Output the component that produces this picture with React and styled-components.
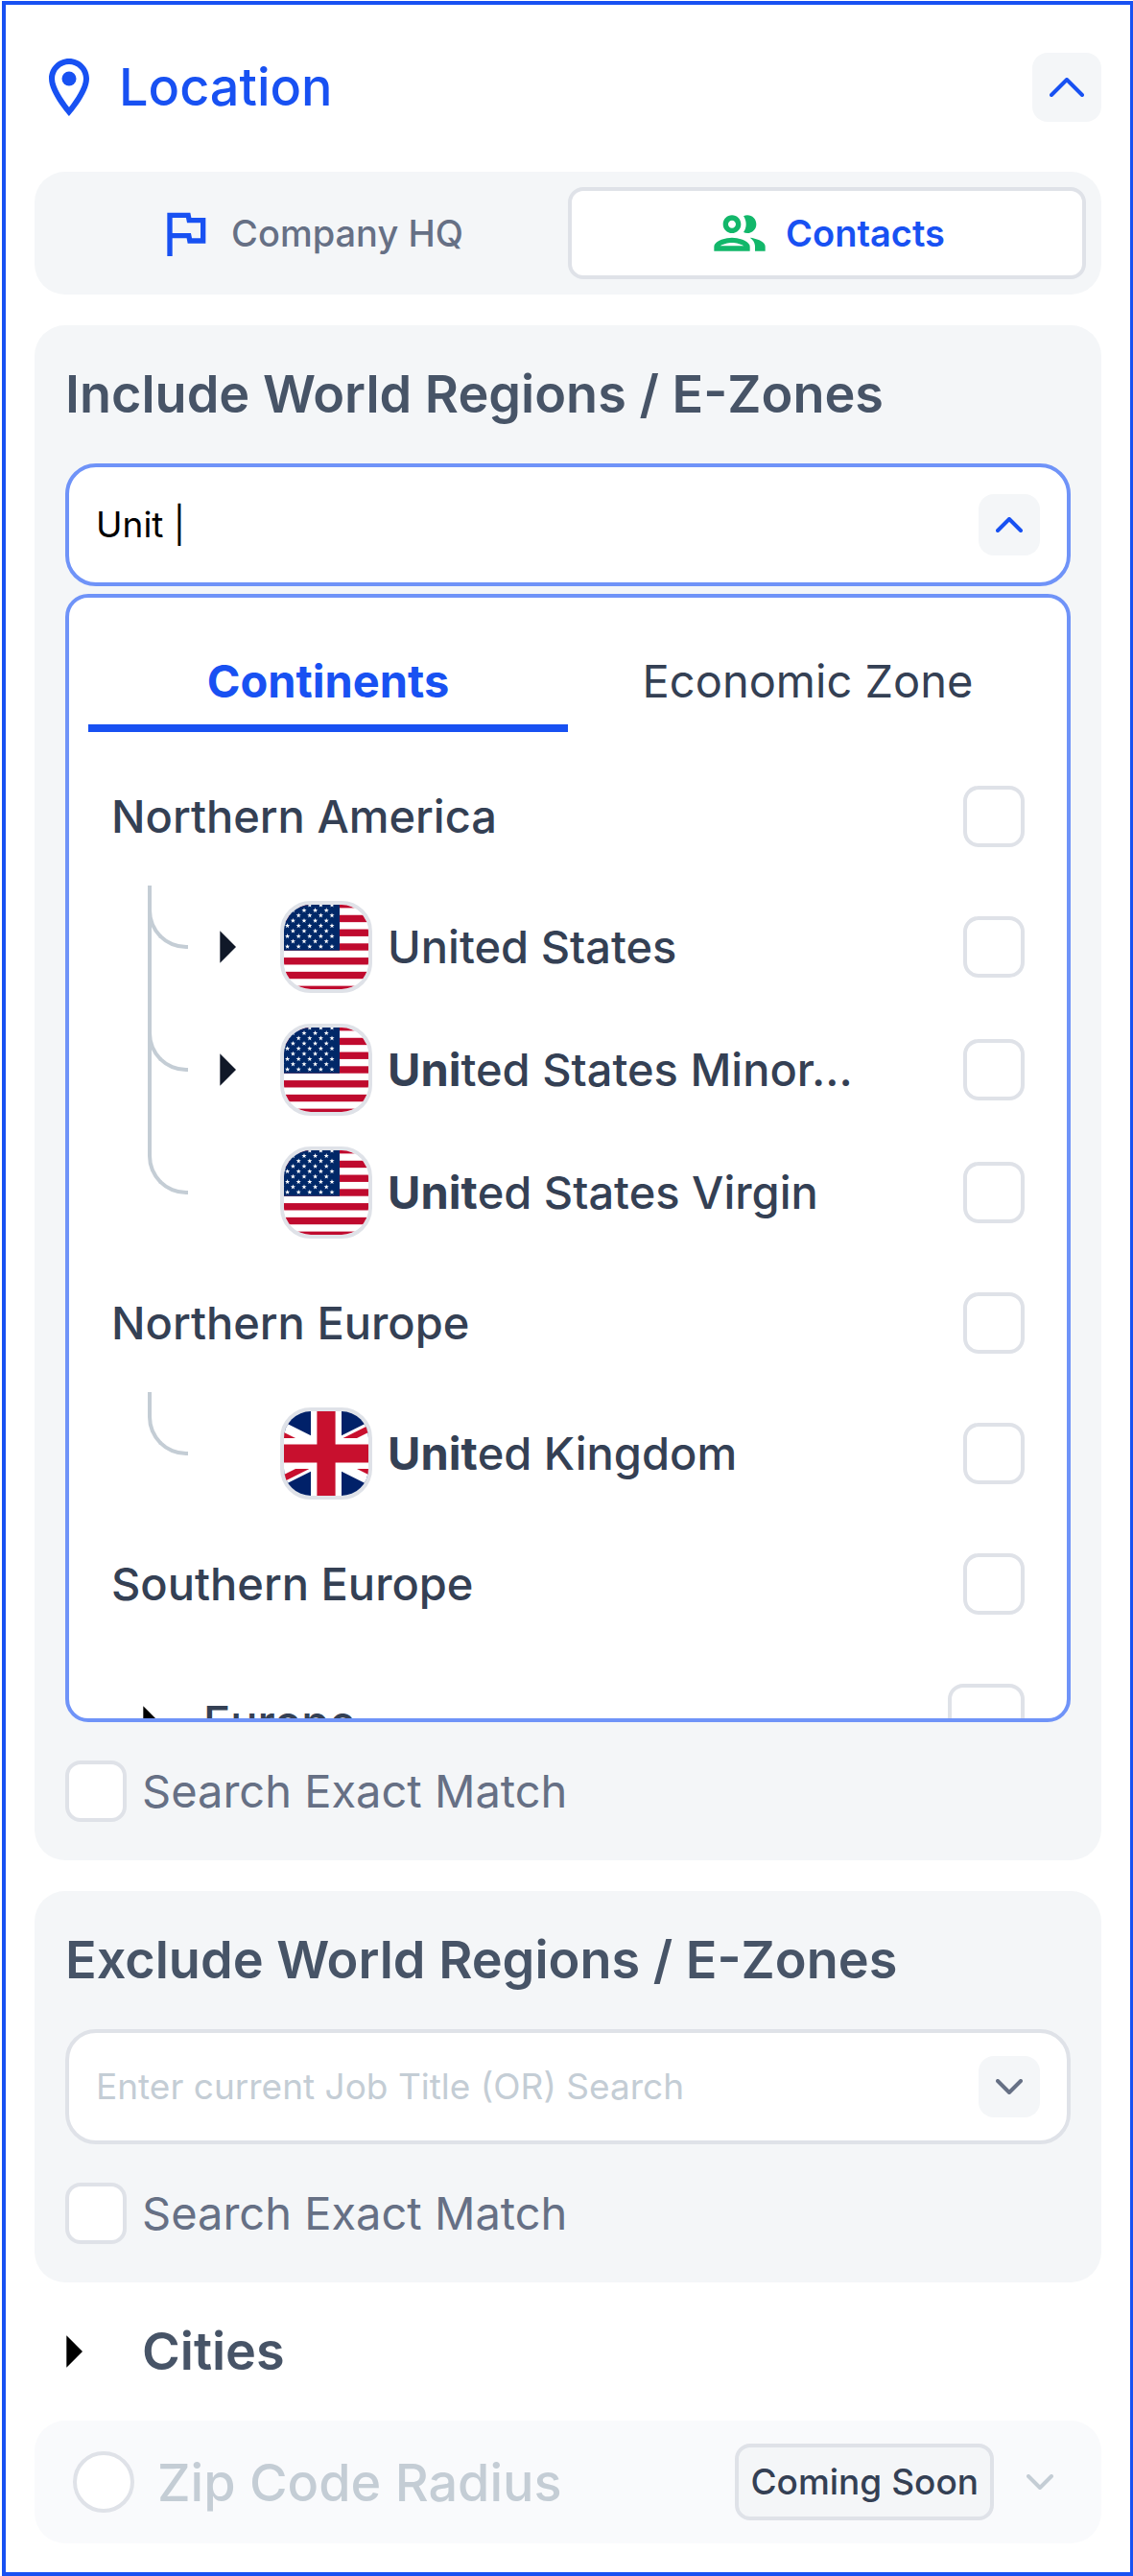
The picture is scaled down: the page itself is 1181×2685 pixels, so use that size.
import { useState } from 'react'
import styled, { createGlobalStyle } from 'styled-components'
import { MdArrowRight, MdOutlineFlag, MdOutlineLocationOn } from 'react-icons/md'

const blue = '#1851f2'
const softBlue = '#6f93f8'
const panel = '#f4f6f8'
const line = '#dfe2e8'
const pale = '#c4cdd5'
const gray = '#667085'
const slate = '#475467'
const ink = '#344054'

const GlobalStyle = createGlobalStyle`
  * {
    box-sizing: border-box;
  }

  body {
    margin: 0;
    background: #fff;
  }

  body, button, input {
    font-family: Inter, "Liberation Sans", sans-serif;
  }

  button {
    padding: 0;
    border: 0;
    background: none;
    cursor: pointer;
  }

  h1, h2, ul {
    margin: 0;
    padding: 0;
    list-style: none;
  }

  svg {
    display: block;
    flex: none;
  }
`

const Page = styled.div`
  padding: 1px 0 0 2px;
`

const Card = styled.main`
  display: flex;
  flex-direction: column;
  gap: 32px;
  padding: 50px 30px 30px;
  border: 4px solid ${blue};
  border-right-width: 3px;
`

const Header = styled.header`
  display: flex;
  align-items: center;
  gap: 16px;
  margin-bottom: 20px;
  color: ${blue};
`

const Title = styled.h1`
  flex: 1;
  font-size: 54px;
  line-height: 72px;
  font-weight: 500;
`

const IconButton = styled.button`
  display: flex;
  flex: none;
  align-items: center;
  justify-content: center;
  width: ${p => p.$size}px;
  height: ${p => p.$size}px;
  border-radius: 16px;
  background: ${p => (p.$plain ? 'none' : panel)};
  color: ${p => p.$color};
`

const Switch = styled.div`
  display: flex;
  padding: 16px;
  border-radius: 32px;
  background: ${panel};
`

const SwitchButton = styled.button`
  display: flex;
  flex: 1;
  align-items: center;
  justify-content: center;
  gap: 16px;
  height: 96px;
  border: 4px solid ${p => (p.$active ? line : 'transparent')};
  border-radius: 16px;
  background: ${p => (p.$active ? '#fff' : 'none')};
  color: ${p => (p.$active ? blue : gray)};
  font-size: 38px;
  font-weight: ${p => (p.$active ? 600 : 500)};

  svg {
    color: ${p => p.$icon};
  }
`

const Panel = styled.section`
  display: flex;
  flex-direction: column;
  padding: 32px 32px 40px;
  border-radius: 32px;
  background: ${panel};
`

const PanelTitle = styled.h2`
  margin-bottom: 32px;
  color: ${slate};
  font-size: 54px;
  line-height: 80px;
  font-weight: 600;
`

const Field = styled.div`
  display: flex;
  align-items: center;
  height: ${p => (p.$open ? 128 : 120)}px;
  padding: 0 28px;
  border: 4px solid ${p => (p.$open ? softBlue : line)};
  border-radius: 32px;
  background: #fff;
`

const TextInput = styled.input`
  flex: 1;
  min-width: 0;
  padding: 0;
  border: 0;
  outline: 0;
  background: none;
  color: #000;
  font-size: 37px;
  line-height: 56px;

  &::placeholder {
    color: ${pale};
    opacity: 1;
  }
`

const Dropdown = styled.div`
  max-height: 1176px;
  margin-top: 8px;
  padding-top: 40px;
  overflow: hidden;
  border: 4px solid ${softBlue};
  border-radius: 24px;
  background: #fff;
`

const Tabs = styled.div`
  display: flex;
  padding: 0 20px;
`

const Tab = styled.button`
  flex: 1;
  height: 100px;
  border-bottom: 8px solid ${p => (p.$active ? blue : 'transparent')};
  color: ${p => (p.$active ? blue : ink)};
  font-size: 47px;
  font-weight: ${p => (p.$active ? 700 : 400)};
`

const Regions = styled.ul`
  display: flex;
  flex-direction: column;
  gap: 56px;
  padding: 56px 44px;
`

const Region = styled.li`
  display: flex;
  flex-direction: column;
  gap: 56px;
`

const Countries = styled.ul`
  display: flex;
  flex-direction: column;
  gap: 32px;
`

const Row = styled.div`
  display: flex;
  align-items: center;
  min-height: ${p => p.$height || 64}px;
`

const CountryRow = styled.li`
  display: flex;
  align-items: center;
  height: 96px;
  padding-left: 38px;
`

// reaches up to the branch of the row above
const Branch = styled.span`
  align-self: flex-start;
  width: 42px;
  height: ${p => (p.$first ? 66 : 178)}px;
  margin-top: ${p => (p.$first ? -16 : -128)}px;
  border-left: 4px solid ${pale};
  border-bottom: 4px solid ${pale};
  border-bottom-left-radius: 40px;
`

const Toggle = styled.button`
  flex: none;
  width: 80px;
  height: 80px;
  margin-right: ${p => p.$gap || 16}px;
  color: ${p => p.$color || '#000'};
`

const NoToggle = styled.span`
  width: 80px;
  margin-right: 16px;
`

const Flag = styled.span`
  flex: none;
  width: 96px;
  height: 96px;
  margin-right: 16px;
  overflow: hidden;
  border: 4px solid ${line};
  border-radius: 32px;
`

const RowLabel = styled.label`
  flex: 1;
  min-width: 0;
  overflow: hidden;
  color: ${ink};
  font-size: 47px;
  line-height: 64px;
  font-weight: 500;
  white-space: nowrap;
  text-overflow: ellipsis;

  b {
    font-weight: 700;
  }
`

const Check = styled.input`
  appearance: none;
  flex: none;
  width: ${p => p.$size || 64}px;
  height: ${p => p.$size || 64}px;
  margin: 0;
  border: 4px solid ${line};
  border-radius: ${p => (p.type === 'radio' ? '50%' : '16px')};
  background: #fff;

  &:checked {
    background: ${blue};
  }
`

const ExactMatch = styled.label`
  display: flex;
  align-items: center;
  gap: 16px;
  margin-top: 40px;
  color: ${gray};
  font-size: 47px;
  line-height: 64px;
`

const Cities = styled.h2`
  display: flex;
  align-items: center;
  color: ${slate};
  font-size: 54px;
  line-height: 80px;
  font-weight: 600;
`

const Zip = styled.section`
  display: flex;
  align-items: center;
  gap: 16px;
  height: 128px;
  padding: 0 32px 0 40px;
  border-radius: 32px;
  background: #f9fafc;
`

const ZipLabel = styled.label`
  display: flex;
  flex: 1;
  align-items: center;
  gap: 24px;
  color: ${pale};
  font-size: 54px;
  font-weight: 500;
`

const Badge = styled.span`
  padding: 0 12px;
  border: 4px solid ${line};
  border-radius: 16px;
  background: ${panel};
  color: ${ink};
  font-size: 37px;
  line-height: 72px;
  font-weight: 500;
  white-space: nowrap;
`

const Chevron = ({ up, width = 28 }) => {
  const h = width === 28 ? 16 : 20
  return (
    <svg width={width} height={h} viewBox={`0 0 ${width} ${h}`} fill="none" stroke="currentColor"
      strokeWidth="4" strokeLinecap="round" strokeLinejoin="round">
      <path d={up
        ? `M2 ${h - 2} L${width / 2} 2 L${width - 2} ${h - 2}`
        : `M2 2 L${width / 2} ${h - 2} L${width - 2} 2`} />
    </svg>
  )
}

const PeopleIcon = () => (
  <svg width="64" height="64" viewBox="0 0 24 24" fill="currentColor">
    <path fillRule="evenodd" d="M9 12c1.93 0 3.5-1.57 3.5-3.5S10.93 5 9 5 5.5 6.57 5.5 8.5 7.07 12 9 12zm0-5c.83 0 1.5.67 1.5 1.5S9.83 10 9 10s-1.5-.67-1.5-1.5S8.17 7 9 7z" />
    <path fillRule="evenodd" d="M9 13.75c-2.34 0-7 1.17-7 3.5V19h14v-1.75c0-2.33-4.66-3.5-7-3.5zM4.34 17c.84-.58 2.87-1.25 4.66-1.25s3.82.67 4.66 1.25H4.34z" />
    <path d="M16.04 13.81c1.16.84 1.96 1.96 1.96 3.44V19h4v-1.75c0-2.02-3.5-3.17-5.96-3.44z" />
    <path d="M15 12c1.93 0 3.5-1.57 3.5-3.5S16.93 5 15 5c-.54 0-1.04.13-1.5.35.63.89 1 1.98 1 3.15s-.37 2.26-1 3.15c.46.22.96.35 1.5.35z" />
  </svg>
)

const star = (cx, cy) => {
  const pts = []
  for (let i = 0; i < 10; i++) {
    const r = i % 2 ? 1.1 : 2.7
    const a = (Math.PI * i) / 5 - Math.PI / 2
    pts.push(`${(cx + r * Math.cos(a)).toFixed(2)},${(cy + r * Math.sin(a)).toFixed(2)}`)
  }
  return pts.join(' ')
}

const stars = []
for (let r = 0; r < 9; r++) {
  for (let c = 0; c < 6; c++) {
    stars.push(star((r % 2 ? 48.2 : 54) - c * 11.6, 4.4 + r * 5.4))
  }
}

const UsFlag = () => (
  <svg width="88" height="88" viewBox="4 4 88 88">
    <rect width="96" height="96" fill="#fff" />
    {[0, 2, 4, 6, 8, 10, 12].map(i => (
      <rect key={i} y={(i * 96) / 13} width="96" height={96 / 13} fill="#bf0a2e" />
    ))}
    <rect width="62" height={(7 * 96) / 13} fill="#002868" />
    {stars.map(s => <polygon key={s} points={s} fill="#fff" />)}
  </svg>
)

const UkFlag = () => (
  <svg width="88" height="88" viewBox="16.25 1.25 27.5 27.5">
    <clipPath id="uk-diagonals">
      <path d="M30 15h30v15zv15h-30zh-30v-15zv-15h30z" />
    </clipPath>
    <rect width="60" height="30" fill="#012169" />
    <path d="M0 0L60 30M60 0L0 30" stroke="#fff" strokeWidth="6" />
    <path d="M0 0L60 30M60 0L0 30" stroke="#c8102e" strokeWidth="4" clipPath="url(#uk-diagonals)" />
    <path d="M30 0v30M0 15h60" stroke="#fff" strokeWidth="10" />
    <path d="M30 0v30M0 15h60" stroke="#c8102e" strokeWidth="6" />
  </svg>
)

const regions = [
  {
    name: 'Northern America',
    countries: [
      { id: 'us', rest: 'United States', flag: 'us', expand: true },
      { id: 'um', match: 'Uni', rest: 'ted States Minor...', flag: 'us', expand: true },
      { id: 'vi', match: 'Unit', rest: 'ed States Virgin', flag: 'us' },
    ],
  },
  {
    name: 'Northern Europe',
    countries: [{ id: 'gb', match: 'Unit', rest: 'ed Kingdom', flag: 'gb' }],
  },
  { name: 'Southern Europe', countries: [] },
]

function Country({ country, first }) {
  return (
    <CountryRow>
      <Branch $first={first} />
      {country.expand
        ? <Toggle type="button" aria-label="Expand" $color="#101828"><MdArrowRight size={80} /></Toggle>
        : <NoToggle />}
      <Flag>{country.flag === 'us' ? <UsFlag /> : <UkFlag />}</Flag>
      <RowLabel htmlFor={country.id}>
        {country.match && <b>{country.match}</b>}{country.rest}
      </RowLabel>
      <Check type="checkbox" id={country.id} />
    </CountryRow>
  )
}

export default function App() {
  const [search, setSearch] = useState('Unit |')
  const [source, setSource] = useState('contacts')
  const [tab, setTab] = useState('continents')

  return (
    <Page>
      <GlobalStyle />
      <Card>
        <Header>
          <MdOutlineLocationOn size={72} />
          <Title>Location</Title>
          <IconButton type="button" aria-label="Collapse location" $size={72} $color={blue}>
            <Chevron up width={36} />
          </IconButton>
        </Header>

        <Switch>
          <SwitchButton type="button" $active={source === 'hq'} $icon={blue} onClick={() => setSource('hq')}>
            <MdOutlineFlag size={64} />Company HQ
          </SwitchButton>
          <SwitchButton type="button" $active={source === 'contacts'} $icon="#12b76a" onClick={() => setSource('contacts')}>
            <PeopleIcon />Contacts
          </SwitchButton>
        </Switch>

        <Panel>
          <PanelTitle>Include World Regions / E-Zones</PanelTitle>
          <Field $open>
            <TextInput aria-label="Include regions" value={search} onChange={e => setSearch(e.target.value)} />
            <IconButton type="button" aria-label="Close list" $size={64} $color={blue}>
              <Chevron up />
            </IconButton>
          </Field>
          <Dropdown>
            <Tabs>
              <Tab type="button" $active={tab === 'continents'} onClick={() => setTab('continents')}>Continents</Tab>
              <Tab type="button" $active={tab === 'zone'} onClick={() => setTab('zone')}>Economic Zone</Tab>
            </Tabs>
            <Regions>
              {regions.map(r => (
                <Region key={r.name}>
                  <Row>
                    <RowLabel htmlFor={r.name}>{r.name}</RowLabel>
                    <Check type="checkbox" id={r.name} />
                  </Row>
                  {r.countries.length > 0 && (
                    <Countries>
                      {r.countries.map((c, i) => <Country key={c.id} country={c} first={i === 0} />)}
                    </Countries>
                  )}
                </Region>
              ))}
              <Region>
                <Row $height={112}>
                  <Toggle type="button" aria-label="Expand Europe"><MdArrowRight size={80} /></Toggle>
                  <RowLabel htmlFor="europe">Europe</RowLabel>
                  <Check type="checkbox" id="europe" $size={80} />
                </Row>
              </Region>
            </Regions>
          </Dropdown>
          <ExactMatch><Check type="checkbox" />Search Exact Match</ExactMatch>
        </Panel>

        <Panel>
          <PanelTitle>Exclude World Regions / E-Zones</PanelTitle>
          <Field>
            <TextInput aria-label="Exclude regions" placeholder="Enter current Job Title (OR) Search" />
            <IconButton type="button" aria-label="Open list" $size={64} $color={gray}>
              <Chevron />
            </IconButton>
          </Field>
          <ExactMatch><Check type="checkbox" />Search Exact Match</ExactMatch>
        </Panel>

        <Cities>
          <Toggle type="button" aria-label="Expand cities" $gap={32}><MdArrowRight size={80} /></Toggle>
          Cities
        </Cities>

        <Zip>
          <ZipLabel><Check type="radio" disabled />Zip Code Radius</ZipLabel>
          <Badge>Coming Soon</Badge>
          <IconButton type="button" aria-label="Open zip code radius" disabled $plain $size={64} $color={pale}>
            <Chevron />
          </IconButton>
        </Zip>
      </Card>
    </Page>
  )
}
